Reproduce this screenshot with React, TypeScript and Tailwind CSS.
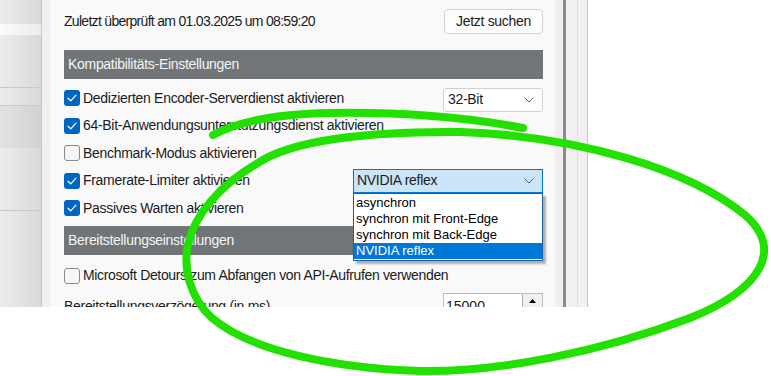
// Settings dialog snapshot with a hand-drawn highlight over it
import React from 'react';

const Check: React.FC<{ checked?: boolean }> = ({ checked }) =>
  checked ? (
    <span className="flex h-[16px] w-[16px] shrink-0 items-center justify-center rounded-[3px] bg-[#0067c0]">
      <svg width="10" height="8" viewBox="0 0 10 8" fill="none">
        <path d="M1 4.2 L3.7 6.8 L9 1.2" stroke="white" strokeWidth="1.2" strokeLinecap="round" strokeLinejoin="round" />
      </svg>
    </span>
  ) : (
    <span className="block h-[16px] w-[16px] shrink-0 rounded-[3px] border border-[#8b8b8b] bg-[#f6f6f6]" />
  );

const Chevron = () => (
  <svg width="10" height="6" viewBox="0 0 10 6" fill="none">
    <path d="M0.5 0.5 L5 5 L9.5 0.5" stroke="#5f5f5f" strokeWidth="1" />
  </svg>
);

interface RowProps {
  label: string;
  checked?: boolean;
  children?: React.ReactNode;
}

const Row: React.FC<RowProps> = ({ label, checked, children }) => (
  <div className="relative flex h-[27.5px] items-center justify-between">
    <label className="flex items-center gap-[3px] text-[14px] tracking-[-0.3px] text-[#1b1b1b]">
      <Check checked={checked} />
      <span>{label}</span>
    </label>
    {children}
  </div>
);

const SectionHeader: React.FC<{ title: string }> = ({ title }) => (
  <div className="flex h-[29px] items-center bg-[#717577] pl-[4px] text-[14px] tracking-[-0.3px] text-[#f4f4f4]">
    {title}
  </div>
);

const options = ['asynchron', 'synchron mit Front-Edge', 'synchron mit Back-Edge', 'NVIDIA reflex'];

export default function App() {
  return (
    <div className="relative h-[376px] w-[771px] overflow-hidden bg-white font-['Liberation_Sans',Arial,sans-serif]">
      <div className="flex h-[307px]">
        {/* sidebar, mostly hidden behind the dialog */}
        <div className="flex w-[41px] flex-col bg-gradient-to-r from-[#ececec] to-[#d9d9d9]">
          <div className="h-[24px]" />
          <div className="h-[11px] bg-gradient-to-r from-[#fbfbfb] to-[#ececec]" />
          <div className="h-[52px]" />
          <div className="h-[18px] border-t border-[#c9c9c9]" />
          <div className="h-[43px] border-t border-[#c9c9c9] bg-gradient-to-r from-[#e2e2e2] to-[#d2d2d2]" />
          <div className="h-[62px]" />
          <div className="flex-1 border-t border-[#c9c9c9]" />
        </div>
        <div className="w-px bg-[#c8c8c8]" />
        <div className="w-[8px] bg-[#f0f0f0]" />

        {/* dialog body */}
        <div className="flex w-[505px] flex-col overflow-hidden bg-[#f9f9f9] pl-[14px] pr-[12px] pt-[9px]">
          <div className="flex items-center justify-between">
            <span className="text-[14px] tracking-[-0.7px] text-[#1b1b1b]">Zuletzt überprüft am 01.03.2025 um 08:59:20</span>
            <button className="h-[25px] w-[99px] rounded-[4px] border border-[#d3d3d3] bg-[#fdfdfd] text-[14px] tracking-[-0.3px] text-[#1b1b1b]">
              Jetzt suchen
            </button>
          </div>

          <div className="mt-[16px]">
            <SectionHeader title="Kompatibilitäts-Einstellungen" />
          </div>

          <div className="mt-[5.5px] flex flex-col">
            <Row label="Dedizierten Encoder-Serverdienst aktivieren" checked>
              <div className="mt-[3px] flex h-[24px] w-[100px] items-center justify-between rounded-[3px] border border-[#d0d0d0] bg-white pl-[4px] pr-[8px] text-[14px] tracking-[-0.3px] text-[#1b1b1b]">
                <span>32-Bit</span>
                <Chevron />
              </div>
            </Row>
            <Row label="64-Bit-Anwendungsunterstützungsdienst aktivieren" checked />
            <Row label="Benchmark-Modus aktivieren" />
            <Row label="Framerate-Limiter aktivieren" checked>
              <div className="relative z-10 flex h-[24px] w-[190px] items-center justify-between border border-[#0078d7] bg-[#cce4f7] pl-[3px] pr-[8px] text-[14px] tracking-[-0.3px] text-[#1b1b1b]">
                <span>NVIDIA reflex</span>
                <Chevron />
                <ul className="absolute left-[-1px] top-[23px] w-[190px] border border-[#1c5fa8] bg-white py-px text-[13px] leading-[16px] tracking-normal text-black shadow-[3px_3px_2px_rgba(0,0,0,0.3)]">
                  {options.map((o, i) => (
                    <li
                      key={o}
                      className={i === options.length - 1 ? 'bg-[#0078d7] pl-[2px] text-white' : 'pl-[2px]'}
                    >
                      {o}
                    </li>
                  ))}
                </ul>
              </div>
            </Row>
            <Row label="Passives Warten aktivieren" checked />
          </div>

          <div className="mt-[4px]">
            <SectionHeader title="Bereitstellungseinstellungen" />
          </div>

          <div className="mt-[10px] flex h-[28px] items-center gap-[3px] text-[14px] tracking-[-0.35px] text-[#1b1b1b]">
            <Check />
            <span>Microsoft Detours zum Abfangen von API-Aufrufen verwenden</span>
          </div>

          <div className="flex items-start justify-between">
            <span className="mt-[10px] text-[14px] tracking-[-0.3px] text-[#1b1b1b]">Bereitstellungsverzögerung (in ms)</span>
            <div className="mt-[7px] flex h-[24px] w-[100px] items-stretch border border-[#bdbdbd] bg-white">
              <span className="flex-1 pl-[2px] pt-[2px] text-[14px] text-[#1b1b1b]">15000</span>
              <span className="flex w-[20px] justify-center border-l border-[#adadad] bg-[#f0f0f0] pt-[5px]">
                <svg width="7" height="4" viewBox="0 0 7 4">
                  <path d="M0 4 L3.5 0 L7 4 Z" fill="#000" />
                </svg>
              </span>
            </div>
          </div>
        </div>

        {/* window frame to the right */}
        <div className="w-[8px] bg-[#efefef]" />
        <div className="w-[3px] bg-[#8a8a8a]" />
        <div className="w-[11px] bg-[#f0f0f0]" />
        <div className="w-px bg-[#e0e0e0]" />
        <div className="w-[9px] bg-[#f0f0f0]" />
        <div className="w-px bg-[#c4c4c4]" />
      </div>

      {/* hand-drawn green circle */}
      <svg className="pointer-events-none absolute inset-0" width="771" height="376" viewBox="0 0 771 376" fill="none">
        <path
          d="M258 163 C292 140 370 131 460 132 C580 136 690 170 745 215 C785 250 760 290 690 318 C600 352 500 372 420 371 C330 368 250 350 212 318 C190 298 183 268 188 245 C194 215 220 185 258 163"
          stroke="#22e000"
          strokeWidth="8"
          strokeLinecap="round"
        />
        <path
          d="M523 128 C470 118 400 112 330 113 C280 114 240 120 213 135"
          stroke="#22e000"
          strokeWidth="8"
          strokeLinecap="round"
        />
      </svg>
    </div>
  );
}
